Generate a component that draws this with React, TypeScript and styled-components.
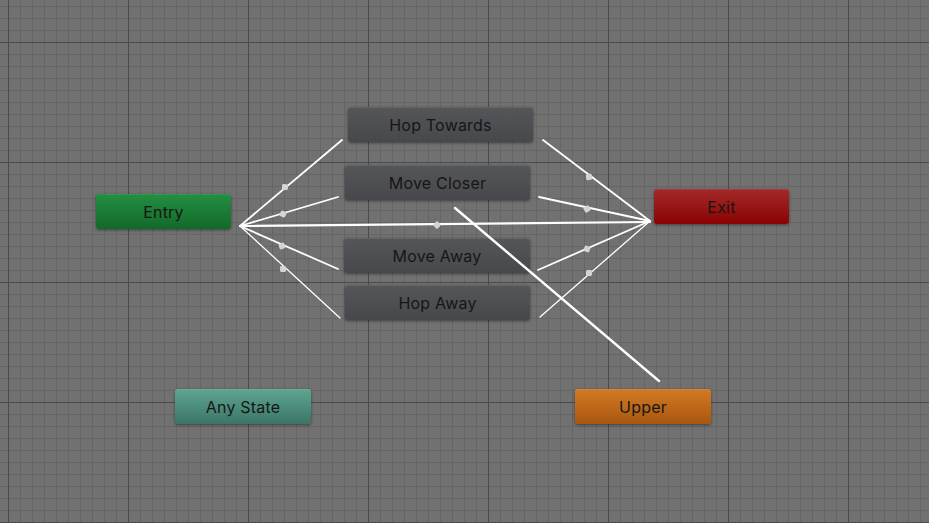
import React from "react";
import styled, { createGlobalStyle } from "styled-components";

const GlobalStyle = createGlobalStyle`
  html, body {
    margin: 0;
    padding: 0;
    background: #707070;
    overflow: hidden;
  }
`;

const Canvas = styled.div`
  position: relative;
  width: 929px;
  height: 523px;
  overflow: hidden;
  background-color: #717171;
  background-image:
    linear-gradient(to right, #4b4b4b 1px, transparent 1px),
    linear-gradient(to bottom, #4b4b4b 1px, transparent 1px),
    linear-gradient(to right, #656565 1px, transparent 1px),
    linear-gradient(to bottom, #656565 1px, transparent 1px);
  background-size: 120px 120px, 120px 120px, 12px 12px, 12px 12px;
  background-position: 8px 0, 0 42px, 8px 0, 0 6px;
  font-family: Inter, "Noto Sans", "DejaVu Sans", sans-serif;
`;

const Wires = styled.svg`
  position: absolute;
  left: 0;
  top: 0;
  z-index: 2;
  pointer-events: none;
`;

type Tone = "default" | "entry" | "exit" | "any" | "layer";

const tones: Record<Tone, [string, string]> = {
  default: ["#55565a", "#47484c"],
  entry: ["#238f42", "#12692a"],
  exit: ["#a32a2a", "#8b0202"],
  any: ["#5ea592", "#3b7567"],
  layer: ["#d27a24", "#a9560f"],
};

const Node = styled.div<{ $tone: Tone; $x: number; $y: number; $w: number }>`
  position: absolute;
  left: ${p => p.$x}px;
  top: ${p => p.$y}px;
  width: ${p => p.$w}px;
  height: 35px;
  display: flex;
  align-items: center;
  justify-content: center;
  border-radius: 3px;
  background: linear-gradient(to bottom, ${p => tones[p.$tone][0]}, ${p => tones[p.$tone][1]});
  box-shadow: 0 1px 3px rgba(0, 0, 0, 0.45), inset 0 1px 0 rgba(255, 255, 255, 0.08);
  color: #161616;
  font-size: 16px;
  letter-spacing: 0.2px;
  z-index: 1;
`;

type Wire = { x1: number; y1: number; x2: number; y2: number; w?: number };

const wires: Wire[] = [
  { x1: 240, y1: 226, x2: 342, y2: 140 },
  { x1: 240, y1: 226, x2: 338, y2: 197 },
  { x1: 240, y1: 226, x2: 650, y2: 222, w: 2.2 },
  { x1: 240, y1: 226, x2: 338, y2: 269 },
  { x1: 240, y1: 226, x2: 340, y2: 318, w: 1.3 },
  { x1: 543, y1: 140, x2: 650, y2: 221 },
  { x1: 539, y1: 197, x2: 650, y2: 221 },
  { x1: 538, y1: 270, x2: 650, y2: 221 },
  { x1: 540, y1: 317, x2: 650, y2: 221, w: 1.3 },
  { x1: 455, y1: 208, x2: 659, y2: 381, w: 2.4 },
];

const arrows = [
  { x: 285, y: 187, a: -40 },
  { x: 283, y: 214, a: -16 },
  { x: 437, y: 225, a: 0 },
  { x: 282, y: 246, a: 24 },
  { x: 283, y: 269, a: 42 },
  { x: 589, y: 177, a: 37 },
  { x: 587, y: 209, a: 12 },
  { x: 587, y: 249, a: -24 },
  { x: 589, y: 273, a: -41 },
];

const states: { label: string; tone: Tone; x: number; y: number; w: number }[] = [
  { label: "Entry", tone: "entry", x: 96, y: 194, w: 135 },
  { label: "Hop Towards", tone: "default", x: 348, y: 107, w: 185 },
  { label: "Move Closer", tone: "default", x: 345, y: 165, w: 185 },
  { label: "Move Away", tone: "default", x: 344, y: 238, w: 186 },
  { label: "Hop Away", tone: "default", x: 345, y: 285, w: 185 },
  { label: "Exit", tone: "exit", x: 654, y: 189, w: 135 },
  { label: "Any State", tone: "any", x: 175, y: 389, w: 136 },
  { label: "Upper", tone: "layer", x: 575, y: 389, w: 136 },
];

export default function App() {
  return (
    <>
      <GlobalStyle />
      <Canvas>
        {states.map(s => (
          <Node key={s.label} $tone={s.tone} $x={s.x} $y={s.y} $w={s.w}>
            {s.label}
          </Node>
        ))}
        <Wires width="929" height="523" viewBox="0 0 929 523">
          {wires.map((l, i) => (
            <line
              key={i}
              x1={l.x1}
              y1={l.y1}
              x2={l.x2}
              y2={l.y2}
              stroke="#fff"
              strokeWidth={l.w ?? 1.8}
              strokeLinecap="round"
            />
          ))}
          {arrows.map((a, i) => (
            <rect
              key={i}
              x={-3}
              y={-3}
              width={6}
              height={6}
              rx={1.5}
              fill="#d4d4d4"
              transform={`translate(${a.x} ${a.y}) rotate(${a.a + 45})`}
            />
          ))}
        </Wires>
      </Canvas>
    </>
  );
}
